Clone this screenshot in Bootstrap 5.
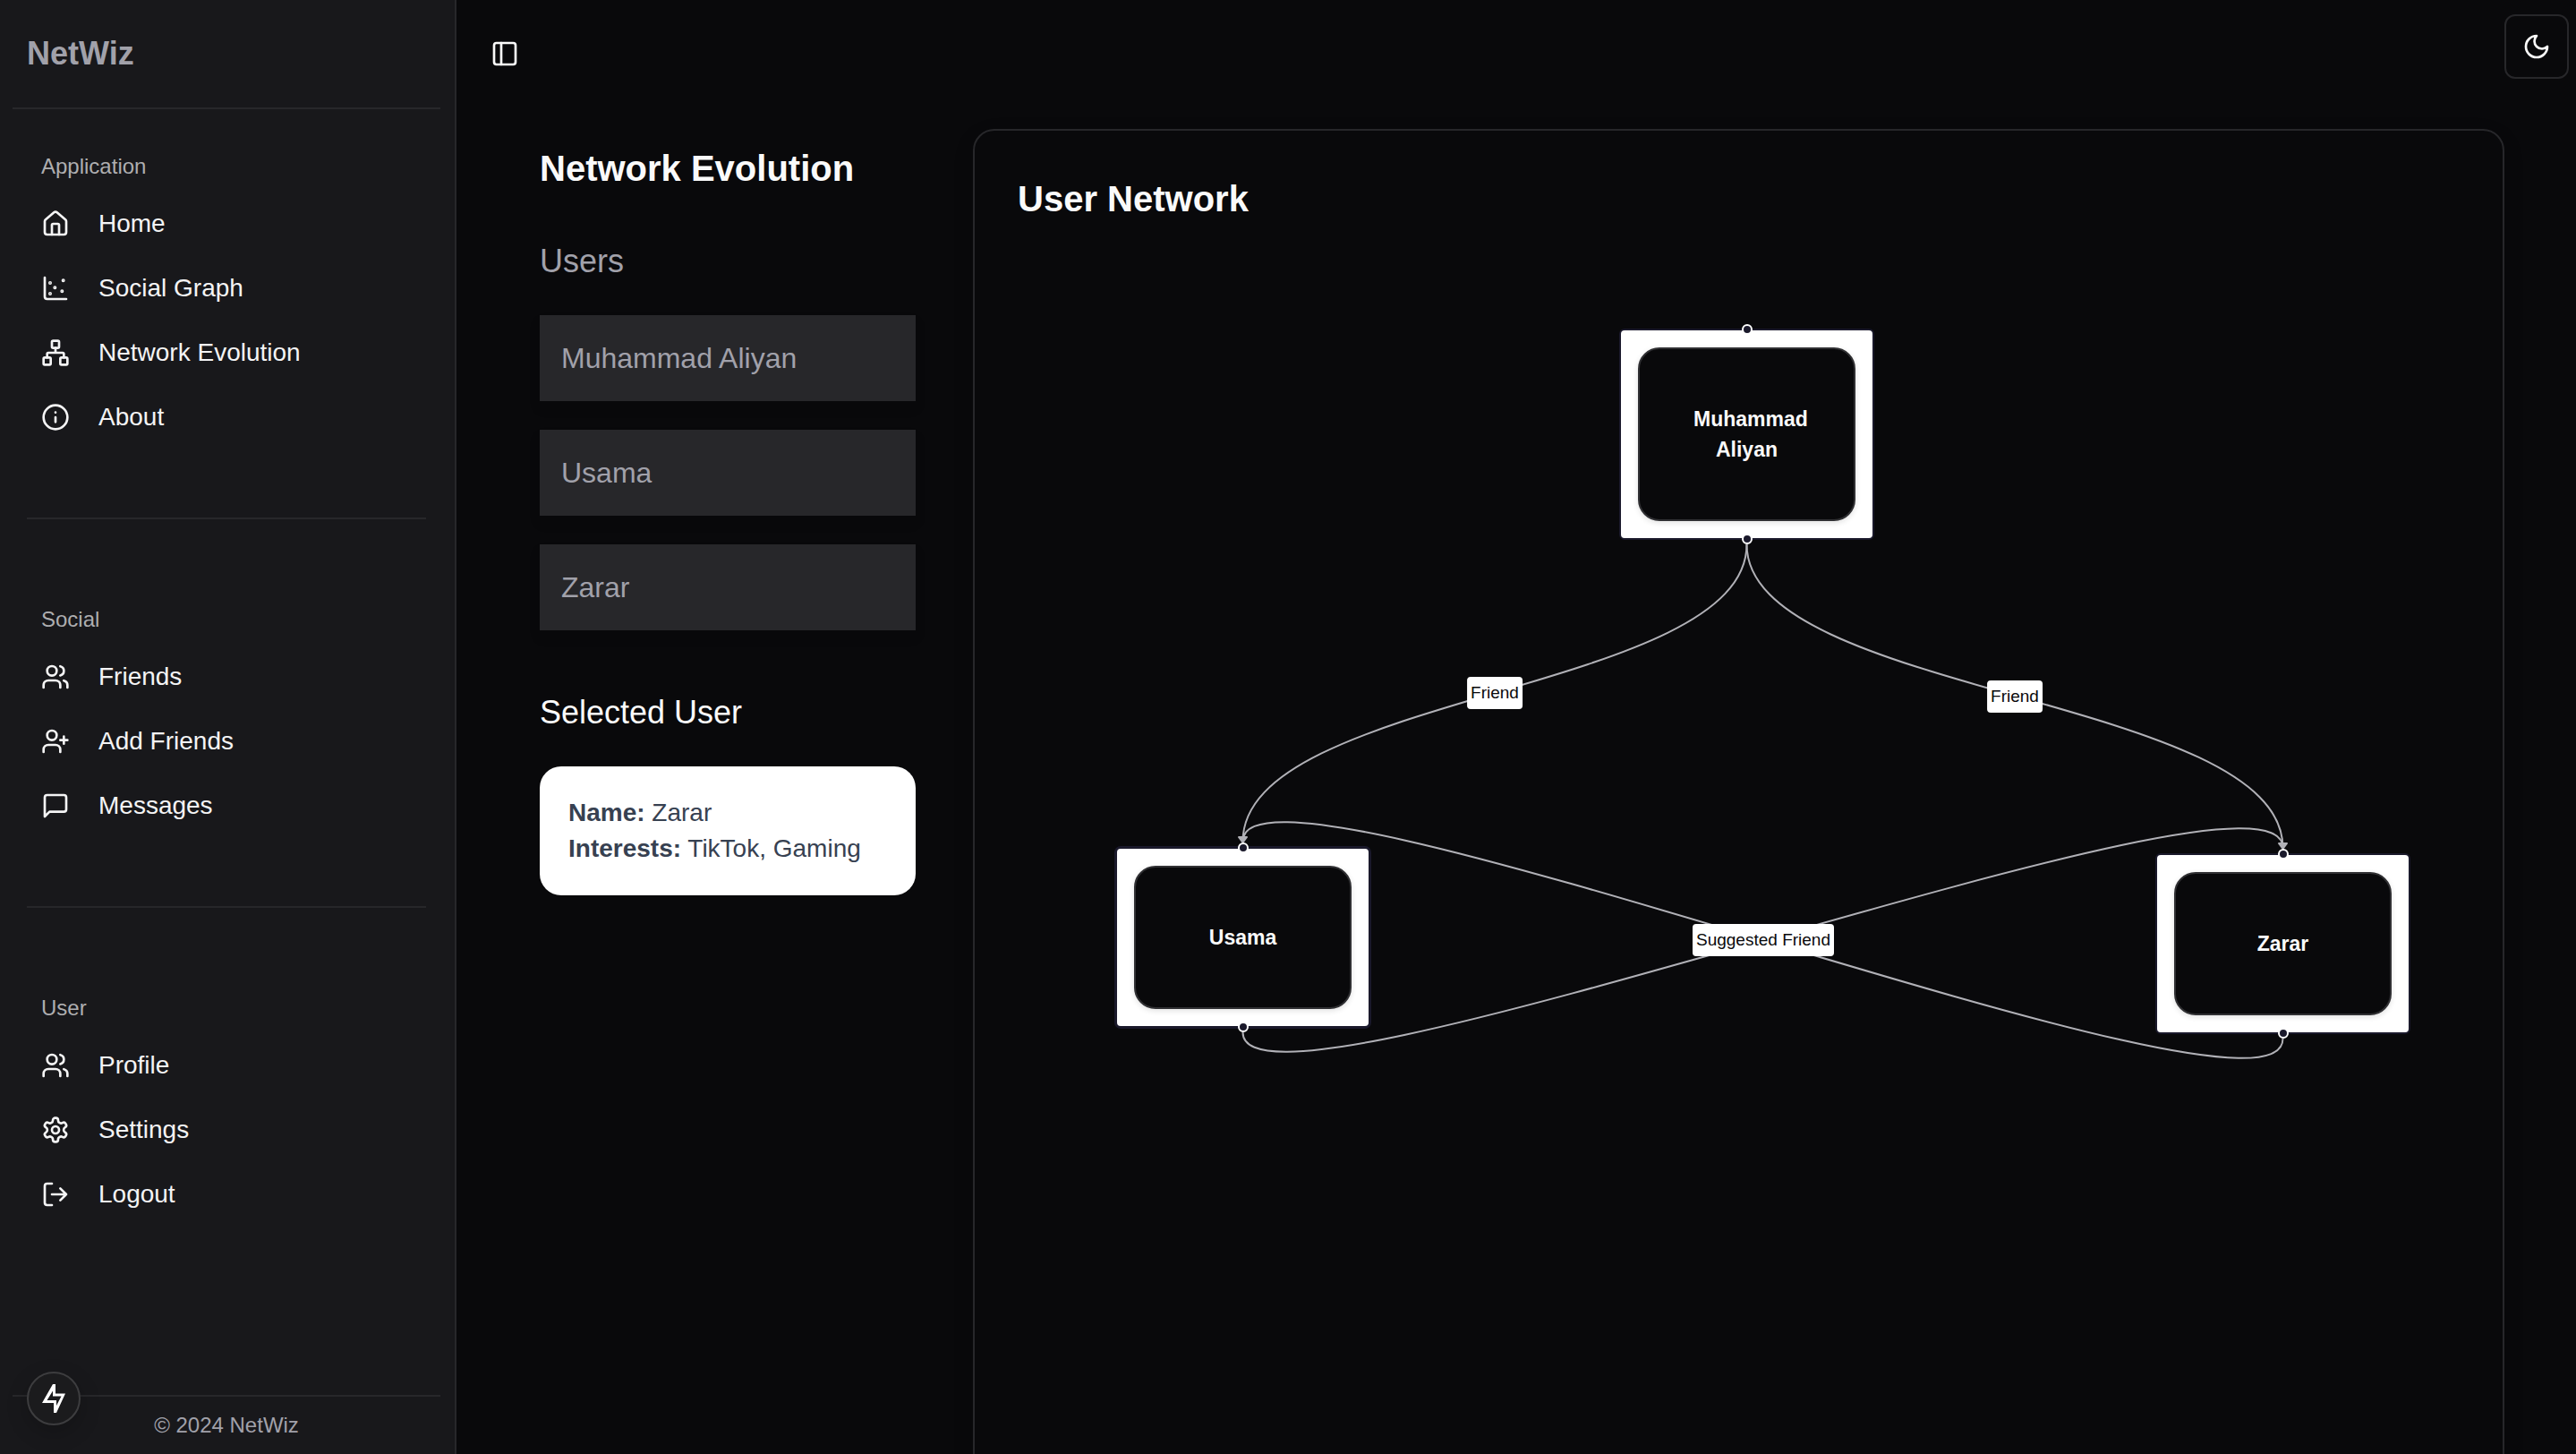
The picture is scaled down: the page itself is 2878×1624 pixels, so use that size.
<!DOCTYPE html>
<html lang="en">
<head>
<meta charset="utf-8">
<meta name="viewport" content="width=device-width, initial-scale=1">
<title>NetWiz - Network Evolution</title>
<link href="https://cdn.jsdelivr.net/npm/bootstrap@5.3.0/dist/css/bootstrap.min.css" rel="stylesheet">
<style>
  :root { --line: #27272a; --fg: #fafafa; --muted: #a1a1aa; --ink: #1a192b; }
  body { background: #09090b; color: var(--fg); font-family: "Liberation Sans", Arial, sans-serif; font-size: 28px; line-height: 40px; }
  h1, h2, p { margin: 0; }
  svg.ico { width: 32px; height: 32px; flex: none; fill: none; stroke: currentColor; stroke-width: 2; stroke-linecap: round; stroke-linejoin: round; }

  .side-panel { width: 510px; flex: none; background: #18181b; border-right: 2px solid var(--line); }
  .brand-row { height: 120px; padding: 4px 30px; font-size: 36px; line-height: 56px; color: var(--muted); }
  .rule-wide { height: 2px; margin: 0 16px 0 14px; background: var(--line); }
  .rule-inset { height: 2px; margin: 80px 32px 80px 30px; background: var(--line); }
  .group-first { margin-top: 32px; }
  .group-label { padding: 0 46px; font-size: 24px; line-height: 64px; color: #aeaeb0; }
  .side-link { height: 64px; padding: 0 46px; gap: 32px; color: #f4f4f5; text-decoration: none; }
  .side-link:hover { background: var(--line); color: #fff; }
  .side-foot { line-height: 64px; font-size: 24px; color: var(--muted); padding-right: 2px; }
  .quick-btn { left: 30px; bottom: 32px; width: 60px; height: 60px; background: #1b1b1d; border: 2px solid #3d3d3f; box-shadow: 0 8px 24px rgba(0,0,0,.2); }
  .quick-btn svg { width: 60px; height: 60px; margin: -2px; flex: none; }

  .top-bar { height: 120px; flex: none; padding: 16px 8px 0 22px; }
  .ghost-btn { width: 56px; height: 56px; background: none; border: 0; color: var(--fg); }
  .theme-btn { width: 72px; height: 72px; background: #09090b; border: 2px solid var(--line); border-radius: 12px; color: var(--fg); }
  .toggle-wrap { padding: 16px 4px; }
  .work-area { padding: 24px 80px 0 93px; gap: 64px; }
  .user-col { width: 420px; flex: none; padding-top: 16px; }
  .title-lg { font-size: 40px; line-height: 56px; font-weight: 700; }
  .title-md { font-size: 36px; line-height: 56px; font-weight: 400; }
  .title-muted { color: var(--muted); }
  .user-list { gap: 32px; }
  .user-btn { display: block; width: 100%; height: 96px; padding: 0 24px; border: 0; text-align: left; background: var(--line); color: var(--muted); font-size: 32px; box-shadow: 0 8px 12px rgba(0,0,0,.1); }
  .detail-box { background: #fff; color: #374151; border-radius: 24px; padding: 32px; }

  .graph-card { border: 2px solid var(--line); border-radius: 24px; padding: 48px; box-shadow: 0 8px 24px rgba(0,0,0,.1); }
  .flow-canvas { height: 1400px; }
  .flow-canvas > svg { left: 0; top: 0; overflow: visible; }
  .flow-node { width: 285px; padding: 19px; background: #fff; border: 2px solid var(--ink); border-radius: 6px; }
  .flow-node.is-active { box-shadow: 0 0 0 1px var(--ink); }
  .flow-inner { border: 2px solid #303033; border-radius: 24px; background: #09090b; padding: 61px 60px; font-size: 23px; line-height: 34px; font-weight: 700; text-align: center; box-shadow: 0 2px 6px rgba(0,0,0,.12); }
  .flow-port { width: 12px; height: 12px; left: calc(50% - 6px); background: var(--ink); border: 2px solid #fff; border-radius: 50%; }
  .port-in { top: -7px; }
  .port-out { bottom: -7px; }
  .flow-tag { background: #fff; color: #09090b; font-size: 19px; line-height: 36px; padding: 0 4px; border-radius: 4px; transform: translate(-50%, -50%); white-space: nowrap; }
</style>
</head>
<body>
<div class="d-flex vh-100 overflow-hidden position-relative">

  <aside class="side-panel d-flex flex-column">
    <div class="brand-row fw-bold d-flex align-items-center">NetWiz</div>
    <div class="rule-wide"></div>

    <nav class="flex-grow-1" aria-label="Main">
      <div class="group-first">
        <div class="group-label">Application</div>
        <div class="d-flex flex-column gap-2">
          <a class="side-link d-flex align-items-center" href="#"><svg class="ico" viewBox="0 0 24 24"><path d="M15 21v-8a1 1 0 0 0-1-1h-4a1 1 0 0 0-1 1v8"/><path d="M3 10a2 2 0 0 1 .709-1.528l7-5.999a2 2 0 0 1 2.582 0l7 5.999A2 2 0 0 1 21 10v9a2 2 0 0 1-2 2H5a2 2 0 0 1-2-2z"/></svg>Home</a>
          <a class="side-link d-flex align-items-center" href="#"><svg class="ico" viewBox="0 0 24 24"><g fill="currentColor"><circle cx="7.5" cy="7.5" r=".5"/><circle cx="18.5" cy="5.5" r=".5"/><circle cx="11.5" cy="11.5" r=".5"/><circle cx="7.5" cy="16.5" r=".5"/><circle cx="17.5" cy="14.5" r=".5"/></g><path d="M3 3v16a2 2 0 0 0 2 2h16"/></svg>Social Graph</a>
          <a class="side-link d-flex align-items-center" href="#"><svg class="ico" viewBox="0 0 24 24"><rect x="16" y="16" width="6" height="6" rx="1"/><rect x="2" y="16" width="6" height="6" rx="1"/><rect x="9" y="2" width="6" height="6" rx="1"/><path d="M5 16v-3a1 1 0 0 1 1-1h12a1 1 0 0 1 1 1v3M12 12V8"/></svg>Network Evolution</a>
          <a class="side-link d-flex align-items-center" href="#"><svg class="ico" viewBox="0 0 24 24"><circle cx="12" cy="12" r="10"/><path d="M12 16v-4M12 8h.01"/></svg>About</a>
        </div>
      </div>

      <div class="rule-inset"></div>

      <div>
        <div class="group-label">Social</div>
        <div class="d-flex flex-column gap-2">
          <a class="side-link d-flex align-items-center" href="#"><svg class="ico" viewBox="0 0 24 24"><path d="M16 21v-2a4 4 0 0 0-4-4H6a4 4 0 0 0-4 4v2"/><circle cx="9" cy="7" r="4"/><path d="M22 21v-2a4 4 0 0 0-3-3.87M16 3.13a4 4 0 0 1 0 7.75"/></svg>Friends</a>
          <a class="side-link d-flex align-items-center" href="#"><svg class="ico" viewBox="0 0 24 24"><path d="M16 21v-2a4 4 0 0 0-4-4H6a4 4 0 0 0-4 4v2"/><circle cx="9" cy="7" r="4"/><path d="M19 8v6M22 11h-6"/></svg>Add Friends</a>
          <a class="side-link d-flex align-items-center" href="#"><svg class="ico" viewBox="0 0 24 24"><path d="M21 15a2 2 0 0 1-2 2H7l-4 4V5a2 2 0 0 1 2-2h14a2 2 0 0 1 2 2z"/></svg>Messages</a>
        </div>
      </div>

      <div class="rule-inset"></div>

      <div>
        <div class="group-label">User</div>
        <div class="d-flex flex-column gap-2">
          <a class="side-link d-flex align-items-center" href="#"><svg class="ico" viewBox="0 0 24 24"><path d="M16 21v-2a4 4 0 0 0-4-4H6a4 4 0 0 0-4 4v2"/><circle cx="9" cy="7" r="4"/><path d="M22 21v-2a4 4 0 0 0-3-3.87M16 3.13a4 4 0 0 1 0 7.75"/></svg>Profile</a>
          <a class="side-link d-flex align-items-center" href="#"><svg class="ico" viewBox="0 0 24 24"><path d="M12.22 2h-.44a2 2 0 0 0-2 2v.18a2 2 0 0 1-1 1.73l-.43.25a2 2 0 0 1-2 0l-.15-.08a2 2 0 0 0-2.73.73l-.22.38a2 2 0 0 0 .73 2.73l.15.1a2 2 0 0 1 1 1.72v.51a2 2 0 0 1-1 1.74l-.15.09a2 2 0 0 0-.73 2.73l.22.38a2 2 0 0 0 2.73.73l.15-.08a2 2 0 0 1 2 0l.43.25a2 2 0 0 1 1 1.73V20a2 2 0 0 0 2 2h.44a2 2 0 0 0 2-2v-.18a2 2 0 0 1 1-1.73l.43-.25a2 2 0 0 1 2 0l.15.08a2 2 0 0 0 2.73-.73l.22-.39a2 2 0 0 0-.73-2.73l-.15-.08a2 2 0 0 1-1-1.74v-.5a2 2 0 0 1 1-1.74l.15-.09a2 2 0 0 0 .73-2.73l-.22-.38a2 2 0 0 0-2.73-.73l-.15.08a2 2 0 0 1-2 0l-.43-.25a2 2 0 0 1-1-1.73V4a2 2 0 0 0-2-2z"/><circle cx="12" cy="12" r="3"/></svg>Settings</a>
          <a class="side-link d-flex align-items-center" href="#"><svg class="ico" viewBox="0 0 24 24"><path d="M9 21H5a2 2 0 0 1-2-2V5a2 2 0 0 1 2-2h4M16 17l5-5-5-5M21 12H9"/></svg>Logout</a>
        </div>
      </div>
    </nav>

    <div class="rule-wide"></div>
    <footer class="side-foot text-center">© 2024 NetWiz</footer>
  </aside>

  <button type="button" class="quick-btn position-absolute rounded-circle p-0 d-flex align-items-center justify-content-center" aria-label="Quick status">
    <svg viewBox="0 0 60 60"><path fill="#fff" fill-rule="evenodd" d="M29 14h3v10.500h11L33 46h-3V35H17zM29 21.500L22.500 32H33v6l5.500-10.500H29z"/></svg>
  </button>

  <main class="flex-grow-1 d-flex flex-column">
    <header class="top-bar d-flex justify-content-between align-items-start">
      <div class="toggle-wrap">
        <button type="button" class="ghost-btn p-0 d-flex align-items-center justify-content-center" aria-label="Toggle sidebar">
          <svg class="ico" viewBox="0 0 24 24"><rect x="3" y="3" width="18" height="18" rx="2"/><path d="M9 3v18"/></svg>
        </button>
      </div>
      <button type="button" class="theme-btn p-0 d-flex align-items-center justify-content-center" aria-label="Toggle theme">
        <svg class="ico" viewBox="0 0 24 24"><path d="M12 3a6 6 0 0 0 9 9 9 9 0 1 1-9-9Z"/></svg>
      </button>
    </header>

    <div class="work-area d-flex align-items-start">
      <section class="user-col">
        <h1 class="title-lg mb-5">Network Evolution</h1>
        <h2 class="title-md title-muted mb-4 pb-2">Users</h2>
        <div class="user-list d-flex flex-column">
          <button type="button" class="user-btn">Muhammad Aliyan</button>
          <button type="button" class="user-btn">Usama</button>
          <button type="button" class="user-btn">Zarar</button>
        </div>
        <h2 class="title-md pt-3 pb-2 mt-5 mb-4">Selected User</h2>
        <div class="detail-box">
          <p><strong>Name:</strong> Zarar</p>
          <p><strong>Interests:</strong> TikTok, Gaming</p>
        </div>
      </section>

      <section class="graph-card flex-grow-1">
        <h2 class="title-lg">User Network</h2>
        <div class="flow-canvas position-relative">
          <svg class="position-absolute" width="1610" height="1000" fill="none" stroke="#b1b1b7" stroke-width="2">
            <path d="M814.500 358C814.500 524 251.500 524 251.500 690"/>
            <path d="M814.500 358C814.500 527 1413.500 527 1413.500 697"/>
            <path d="M251.500 903C251.500 1027 1413.500 573 1413.500 697"/>
            <path d="M1413.500 910C1413.500 1037 251.500 563 251.500 690"/>
            <path fill="#b1b1b7" stroke-linejoin="round" d="M247 685h9l-4.500 6z"/>
            <path fill="#b1b1b7" stroke-linejoin="round" d="M1409 692h9l-4.500 6z"/>
          </svg>

          <!-- people -->
          <div class="flow-node position-absolute" style="left: 672px; top: 117px">
            <span class="flow-port port-in position-absolute"></span>
            <div class="flow-inner">Muhammad Aliyan</div>
            <span class="flow-port port-out position-absolute"></span>
          </div>
          <div class="flow-node is-active position-absolute" style="left: 109px; top: 696px">
            <span class="flow-port port-in position-absolute"></span>
            <div class="flow-inner">Usama</div>
            <span class="flow-port port-out position-absolute"></span>
          </div>
          <div class="flow-node position-absolute" style="left: 1271px; top: 703px">
            <span class="flow-port port-in position-absolute"></span>
            <div class="flow-inner">Zarar</div>
            <span class="flow-port port-out position-absolute"></span>
          </div>

          <!-- relations -->
          <span class="flow-tag position-absolute" style="left: 533px; top: 524px">Friend</span>
          <span class="flow-tag position-absolute" style="left: 1114px; top: 528px">Friend</span>
          <span class="flow-tag position-absolute" style="left: 833px; top: 800px">Suggested Friend</span>
        </div>
      </section>
    </div>
  </main>
</div>
<script src="https://cdn.jsdelivr.net/npm/bootstrap@5.3.0/dist/js/bootstrap.bundle.min.js"></script>
</body>
</html>
